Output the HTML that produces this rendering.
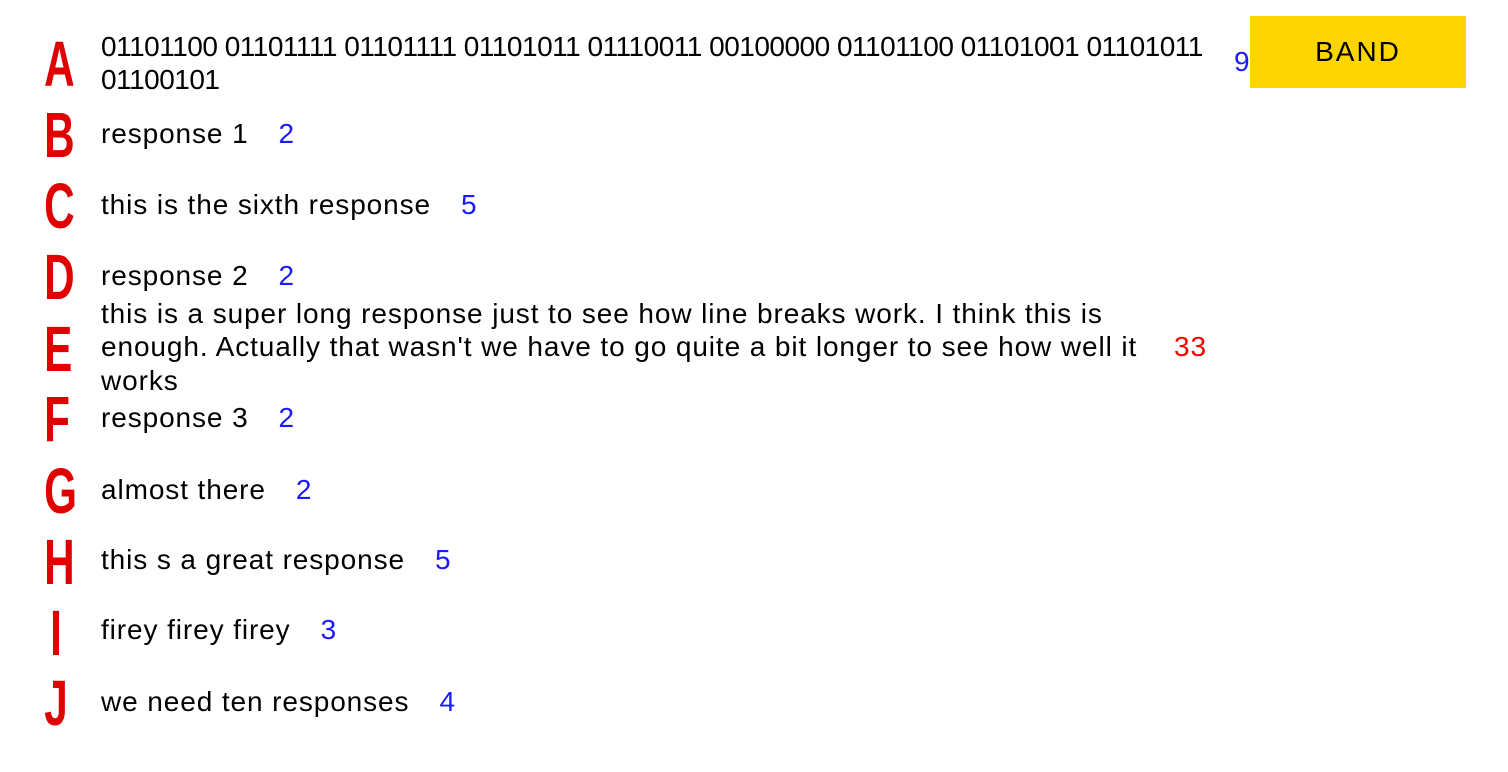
<!DOCTYPE html>
<html><head><meta charset="utf-8"><style>
body{margin:0;width:1508px;height:772px;background:#fff;position:relative;overflow:hidden;font-family:"Liberation Sans",sans-serif;}
.l{position:absolute;left:38px;width:36px;text-align:center;color:#e00000;font-weight:bold;font-size:64px;line-height:64px;transform:scaleX(0.66);transform-origin:center;}
.t{position:absolute;left:101px;font-size:28px;line-height:34px;letter-spacing:0.9px;color:#000;white-space:nowrap;}
.n{color:#1a1aff;margin-left:30px;}
.band{position:absolute;left:1250px;top:16px;width:216px;height:72px;background:#ffd500;font-size:28px;line-height:72px;text-align:center;letter-spacing:2px;}
</style></head><body>
<div class="l" style="top:32px">A</div>
<div class="l" style="top:103px">B</div>
<div class="l" style="top:174px">C</div>
<div class="l" style="top:245px">D</div>
<div class="l" style="top:317px">E</div>
<div class="l" style="top:387px">F</div>
<div class="l" style="top:459px">G</div>
<div class="l" style="top:530px">H</div>
<div class="l" style="top:601px">I</div>
<div class="l" style="top:671px">J</div>

<div class="t" style="top:30px;letter-spacing:-0.5px">01101100 01101111 01101111 01101011 01110011 00100000 01101100 01101001 01101011</div>
<div class="t" style="top:63px;letter-spacing:-0.5px">01100101</div>
<div class="t" style="top:45px;left:1234px;color:#1a1aff">9</div>
<div class="band">BAND</div>

<div class="t" style="top:117px">response 1<span class="n">2</span></div>
<div class="t" style="top:188px">this is the sixth response<span class="n">5</span></div>
<div class="t" style="top:259px">response 2<span class="n">2</span></div>
<div class="t" style="top:297px">this is a super long response just to see how line breaks work. I think this is</div>
<div class="t" style="top:330px">enough. Actually that wasn't we have to go quite a bit longer to see how well it</div>
<div class="t" style="top:330px;left:1174px;color:#ff0000">33</div>
<div class="t" style="top:364px">works</div>
<div class="t" style="top:401px">response 3<span class="n">2</span></div>
<div class="t" style="top:473px">almost there<span class="n">2</span></div>
<div class="t" style="top:543px">this s a great response<span class="n">5</span></div>
<div class="t" style="top:613px">firey firey firey<span class="n">3</span></div>
<div class="t" style="top:685px">we need ten responses<span class="n">4</span></div>
</body></html>
